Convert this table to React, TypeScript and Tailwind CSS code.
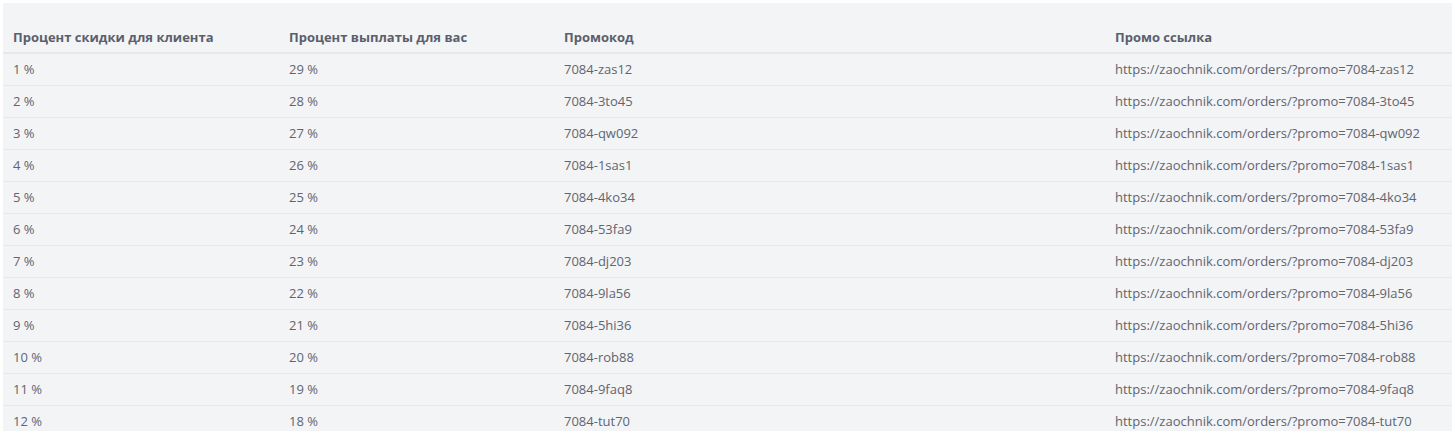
const rows = [
  ['1 %', '29 %', '7084-zas12'],
  ['2 %', '28 %', '7084-3to45'],
  ['3 %', '27 %', '7084-qw092'],
  ['4 %', '26 %', '7084-1sas1'],
  ['5 %', '25 %', '7084-4ko34'],
  ['6 %', '24 %', '7084-53fa9'],
  ['7 %', '23 %', '7084-dj203'],
  ['8 %', '22 %', '7084-9la56'],
  ['9 %', '21 %', '7084-5hi36'],
  ['10 %', '20 %', '7084-rob88'],
  ['11 %', '19 %', '7084-9faq8'],
  ['12 %', '18 %', '7084-tut70'],
];

export default function App() {
  return (
    <div className="bg-white p-[3px] font-['Open_Sans',sans-serif] text-[13px]">
      <div className="h-[428px] overflow-hidden bg-[#f3f4f6]">
        <table className="w-full table-fixed border-collapse">
          <colgroup>
            <col className="w-[276px]" />
            <col className="w-[275px]" />
            <col className="w-[551px]" />
            <col />
          </colgroup>
          <thead>
            <tr className="border-b-2 border-[#e6e8ec] text-left">
              <th className="pl-[10px] pt-[25px] pb-[6px] font-bold leading-[18px] text-[#5b5f6c]">Процент скидки для клиента</th>
              <th className="pl-[10px] pt-[25px] pb-[6px] font-bold leading-[18px] text-[#5b5f6c]">Процент выплаты для вас</th>
              <th className="pl-[10px] pt-[25px] pb-[6px] font-bold leading-[18px] text-[#5b5f6c]">Промокод</th>
              <th className="pl-[10px] pt-[25px] pb-[6px] font-bold leading-[18px] text-[#5b5f6c]">Промо ссылка</th>
            </tr>
          </thead>
          <tbody>
            {rows.map(([a, b, code]) => (
              <tr key={code} className="border-b border-[#e6e8ec] text-[#61656f]">
                <td className="h-[32px] pl-[10px] leading-[18px]">{a}</td>
                <td className="h-[32px] pl-[10px] leading-[18px]">{b}</td>
                <td className="h-[32px] pl-[10px] leading-[18px]">{code}</td>
                <td className="h-[32px] pl-[10px] leading-[18px]">https://zaochnik.com/orders/?promo={code}</td>
              </tr>
            ))}
          </tbody>
        </table>
      </div>
    </div>
  );
}
